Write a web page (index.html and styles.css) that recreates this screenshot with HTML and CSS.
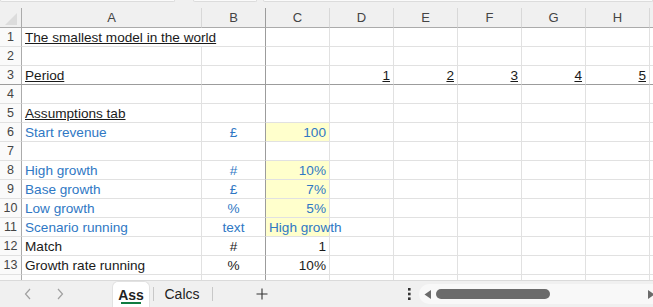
FILE: index.html
```html
<!DOCTYPE html>
<html lang="en">
<head>
  <meta charset="UTF-8">
  <title>The smallest model in the world</title>
  <link rel="stylesheet" href="styles.css">
</head>
<body>
  <div class="app">
    <div class="strip">
      <span class="pill pill-name"></span>
      <span class="pill pill-fx"></span>
      <span class="pill pill-bar"></span>
    </div>

    <div class="sheet">
      <!-- column headers -->
      <div class="hd corner"><span class="tri"></span></div>
      <div class="hd">A</div>
      <div class="hd freeze-col">B</div>
      <div class="hd">C</div>
      <div class="hd">D</div>
      <div class="hd">E</div>
      <div class="hd">F</div>
      <div class="hd">G</div>
      <div class="hd">H</div>
      <div class="hd last"></div>

      <!-- 1 -->
      <div class="rn">1</div>
      <div class="c span2 u">The smallest model in the world</div>
      <div class="c"></div><div class="c"></div><div class="c"></div><div class="c"></div><div class="c"></div><div class="c"></div><div class="c last"></div>

      <!-- 2 -->
      <div class="rn">2</div>
      <div class="c"></div><div class="c freeze-col"></div>
      <div class="c"></div><div class="c"></div><div class="c"></div><div class="c"></div><div class="c"></div><div class="c"></div><div class="c last"></div>

      <!-- 3 -->
      <div class="rn freeze-row">3</div>
      <div class="c freeze-row"><span class="u">Period</span></div>
      <div class="c freeze-row freeze-col"></div>
      <div class="c freeze-row"></div>
      <div class="c freeze-row num"><span class="u">1</span></div>
      <div class="c freeze-row num"><span class="u">2</span></div>
      <div class="c freeze-row num"><span class="u">3</span></div>
      <div class="c freeze-row num"><span class="u">4</span></div>
      <div class="c freeze-row num"><span class="u">5</span></div>
      <div class="c freeze-row last"></div>

      <!-- 4 -->
      <div class="rn">4</div>
      <div class="c"></div><div class="c freeze-col"></div>
      <div class="c"></div><div class="c"></div><div class="c"></div><div class="c"></div><div class="c"></div><div class="c"></div><div class="c last"></div>

      <!-- 5 -->
      <div class="rn">5</div>
      <div class="c"><span class="u">Assumptions tab</span></div>
      <div class="c freeze-col"></div>
      <div class="c"></div><div class="c"></div><div class="c"></div><div class="c"></div><div class="c"></div><div class="c"></div><div class="c last"></div>

      <!-- 6 -->
      <div class="rn">6</div>
      <div class="c blue">Start revenue</div>
      <div class="c freeze-col unit blue">£</div>
      <div class="c input num blue">100</div>
      <div class="c"></div><div class="c"></div><div class="c"></div><div class="c"></div><div class="c"></div><div class="c last"></div>

      <!-- 7 -->
      <div class="rn">7</div>
      <div class="c"></div><div class="c freeze-col"></div>
      <div class="c"></div><div class="c"></div><div class="c"></div><div class="c"></div><div class="c"></div><div class="c"></div><div class="c last"></div>

      <!-- 8 -->
      <div class="rn">8</div>
      <div class="c blue">High growth</div>
      <div class="c freeze-col unit blue">#</div>
      <div class="c input num blue">10%</div>
      <div class="c"></div><div class="c"></div><div class="c"></div><div class="c"></div><div class="c"></div><div class="c last"></div>

      <!-- 9 -->
      <div class="rn">9</div>
      <div class="c blue">Base growth</div>
      <div class="c freeze-col unit blue">£</div>
      <div class="c input num blue">7%</div>
      <div class="c"></div><div class="c"></div><div class="c"></div><div class="c"></div><div class="c"></div><div class="c last"></div>

      <!-- 10 -->
      <div class="rn">10</div>
      <div class="c blue">Low growth</div>
      <div class="c freeze-col unit blue">%</div>
      <div class="c input num blue">5%</div>
      <div class="c"></div><div class="c"></div><div class="c"></div><div class="c"></div><div class="c"></div><div class="c last"></div>

      <!-- 11 -->
      <div class="rn">11</div>
      <div class="c blue">Scenario running</div>
      <div class="c freeze-col unit blue">text</div>
      <div class="c input blue">High growth</div>
      <div class="c"></div><div class="c"></div><div class="c"></div><div class="c"></div><div class="c"></div><div class="c last"></div>

      <!-- 12 -->
      <div class="rn">12</div>
      <div class="c">Match</div>
      <div class="c freeze-col unit">#</div>
      <div class="c num">1</div>
      <div class="c"></div><div class="c"></div><div class="c"></div><div class="c"></div><div class="c"></div><div class="c last"></div>

      <!-- 13 -->
      <div class="rn">13</div>
      <div class="c">Growth rate running</div>
      <div class="c freeze-col unit">%</div>
      <div class="c num">10%</div>
      <div class="c"></div><div class="c"></div><div class="c"></div><div class="c"></div><div class="c"></div><div class="c last"></div>

      <!-- 14 (only a sliver shows) -->
      <div class="rn"></div>
      <div class="c"></div><div class="c freeze-col"></div>
      <div class="c"></div><div class="c"></div><div class="c"></div><div class="c"></div><div class="c"></div><div class="c"></div><div class="c last"></div>
    </div>

    <div class="tabbar">
      <div class="tab-nav">
        <svg class="arrow" width="8" height="12" viewBox="0 0 8 12"><path d="M6 1 L1.5 6 L6 11" fill="none" stroke="currentColor" stroke-width="1.2"/></svg>
        <svg class="arrow" width="8" height="12" viewBox="0 0 8 12"><path d="M2 1 L6.5 6 L2 11" fill="none" stroke="currentColor" stroke-width="1.2"/></svg>
      </div>
      <div class="tab active">Ass</div>
      <span class="sep"></span>
      <div class="tab">Calcs</div>
      <span class="sep"></span>
      <div class="add">
        <svg width="12" height="12" viewBox="0 0 12 12"><path d="M6 0.5 V11.5 M0.5 6 H11.5" stroke="#333" stroke-width="1.1"/></svg>
      </div>
      <div class="more">
        <svg width="3" height="12" viewBox="0 0 3 12"><rect x="0" y="0" width="2.6" height="2.6" fill="#333"/><rect x="0" y="4.7" width="2.6" height="2.6" fill="#333"/><rect x="0" y="9.4" width="2.6" height="2.6" fill="#333"/></svg>
      </div>
      <div class="hscroll">
        <svg width="8" height="9" viewBox="0 0 8 9"><path d="M7 0 V9 L0.5 4.5 Z" fill="#6b6b6b"/></svg>
        <span class="thumb"></span>
        <svg class="right" width="8" height="9" viewBox="0 0 8 9"><path d="M0 0 V9 L6.5 4.5 Z" fill="#6b6b6b"/></svg>
      </div>
    </div>
  </div>
</body>
</html>
```

FILE: styles.css
```css
* { box-sizing: border-box; }

html, body {
  margin: 0;
  overflow: hidden;
  background: #fff;
}

body {
  font-family: "Liberation Sans", Arial, sans-serif;
  font-size: 13.6px;
  color: #1a1a1a;
}

.app {
  width: 653px;
  height: 307px;
  display: flex;
  flex-direction: column;
}

/* bottoms of the formula bar boxes above the grid */
.strip {
  height: 8px;
  background: #f0f0f0;
  display: flex;
  gap: 6px;
}

.pill {
  height: 2px;
  background: #fafafa;
  border: 1px solid #dcdcdc;
  border-top: 0;
  border-radius: 0 0 3px 3px;
}

.pill-name { width: 175px; }
.pill-fx { width: 64px; margin-left: 12px; }
.pill-bar { flex: 1; }

/* Grid */

.sheet {
  display: grid;
  grid-template-columns: 22px 180px repeat(7, 64px) 1fr;
  grid-template-rows: 20px;
  grid-auto-rows: 19px;
  height: 272px;
  overflow: hidden;
}

.hd {
  background: #f0f0f0;
  color: #444;
  font-size: 13px;
  border-right: 1px solid #d8d8d8;
  border-bottom: 1px solid #ababab;
  text-align: center;
  line-height: 19px;
}

.hd.corner {
  border-right-color: #ababab;
  position: relative;
}

.tri {
  position: absolute;
  right: 4px;
  bottom: 2px;
  width: 0;
  height: 0;
  border-left: 12px solid transparent;
  border-bottom: 12px solid #dcdcdc;
}

.rn {
  background: #fafafa;
  color: #444;
  text-align: center;
  border-right: 1px solid #ababab;
  border-bottom: 1px solid #e1e1e1;
  line-height: 19px;
  font-size: 12.5px;
}

.c {
  border-right: 1px solid #e1e1e1;
  border-bottom: 1px solid #e1e1e1;
  padding: 0 3px;
  line-height: 19px;
  white-space: nowrap;
}

.c.span2 {
  grid-column: span 2;
  border-right-color: #9c9c9c;
}

.last { border-right: 0; }

.freeze-col { border-right-color: #9c9c9c; }
.freeze-row { border-bottom-color: #9c9c9c; }

.u { text-decoration: underline; }

.num { text-align: right; }
.unit { text-align: center; }

.blue { color: #2f78c4; }

.input { background: #ffffcc; }

/* Sheet tabs */

.tabbar {
  flex: 1;
  display: flex;
  align-items: flex-end;
  background: #f0f0f0;
  border-top: 1px solid #dadada;
}

.tab-nav {
  width: 112px;
  height: 26px;
  display: flex;
  align-items: center;
  gap: 24px;
  padding-left: 24px;
  color: #a0a0a0;
}

.tab {
  height: 26px;
  display: flex;
  align-items: center;
  justify-content: center;
  font-size: 14px;
  color: #222;
}

.tab.active {
  width: 38px;
  background: #fff;
  border: 1px solid #e2e2e2;
  border-bottom: 0;
  border-radius: 6px 6px 0 0;
  font-weight: bold;
  position: relative;
}

.tab.active::after {
  content: "";
  position: absolute;
  left: 8px;
  right: 8px;
  bottom: 3px;
  height: 2px;
  background: #107c41;
}

.tab:not(.active) {
  width: 54px;
}

.sep {
  align-self: center;
  width: 1px;
  height: 14px;
  margin: 0 1px 0 3px;
  background: #c8c8c8;
}

.add {
  width: 96px;
  height: 26px;
  display: flex;
  align-items: center;
  padding-left: 42px;
}

.more {
  width: 109px;
  height: 26px;
  display: flex;
  align-items: center;
  padding-left: 98px;
}

.hscroll {
  flex: 1;
  height: 20px;
  margin-bottom: 3px;
  background: #f8f8f8;
  border-radius: 10px 0 0 10px;
  display: flex;
  align-items: center;
  padding-left: 5px;
}

.thumb {
  width: 114px;
  height: 10px;
  margin-left: 4px;
  border-radius: 5px;
  background: #6b6b6b;
}

.hscroll .right {
  margin-left: auto;
  margin-right: -3px;
}
```
